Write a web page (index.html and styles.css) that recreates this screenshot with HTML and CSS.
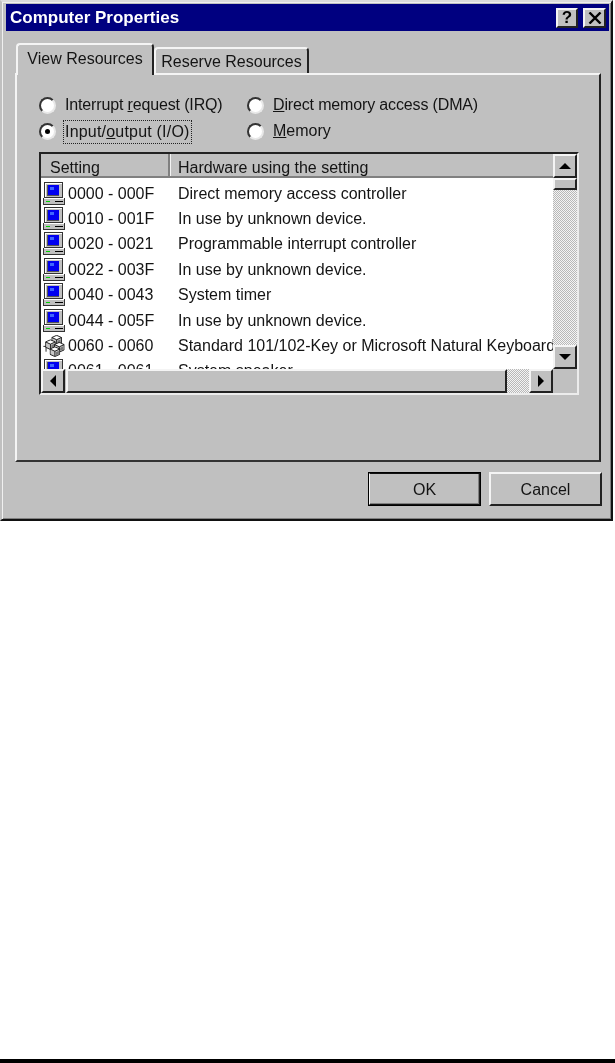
FILE: index.html
```html
<!DOCTYPE html>
<html lang="en">
<head>
  <meta charset="UTF-8">
  <title>Computer Properties</title>
  <link rel="stylesheet" href="styles.css">
</head>
<body>
  <svg class="icon-defs" width="0" height="0">
    <symbol id="pc" viewBox="0 0 22 23">
      <path d="M1 0h19v16H1z" fill="#333"/>
      <path d="M2 1h17v14H2z" fill="#c0c0c0"/>
      <path d="M2 1h17v1H3v13H2z" fill="#fff"/>
      <path d="M4 3h12v11H4z" fill="#555"/>
      <path d="M5 3h11v10H5z" fill="#0000f0"/>
      <path d="M7 5h4v3H7z" fill="#3f66ff"/>
      <path d="M0 16h22v7H0z" fill="#333"/>
      <path d="M1 16h20v6H1z" fill="#c0c0c0"/>
      <path d="M1 16h20v1H1z" fill="#fff"/>
      <path d="M3 19h4v1H3z" fill="#00d000"/>
      <path d="M12 19h8v1h-8z" fill="#000"/>
    </symbol>
    <symbol id="cube" viewBox="0 0 12 12">
      <path d="M6 .5 11.5 3v6L6 11.5.5 9V3z" fill="#c8c8c8" stroke="#111"/>
      <path d="M6 1.5 10 3 6 5 2 3z" fill="#fff"/>
      <path d="M6 5.5v5.5M.5 3 6 5.5 11.5 3" fill="none" stroke="#111"/>
      <path d="M7 6.5l3.5-1.6v3.6L7 10z" fill="#777"/>
    </symbol>
    <symbol id="device" viewBox="0 0 24 26">
      <path d="M0 14h5M3 14v6" stroke="#111" fill="none"/>
      <use href="#cube" x="9" y="1" width="12" height="12"/>
      <use href="#cube" x="2" y="6" width="12" height="12"/>
      <use href="#cube" x="12" y="9" width="12" height="12"/>
      <use href="#cube" x="7" y="14" width="12" height="12"/>
    </symbol>
  </svg>

  <div class="window">
    <div class="title-bar">
      <span class="title-text">Computer Properties</span>
      <div class="title-buttons">
        <div class="bevel title-btn help-btn">?</div>
        <div class="bevel title-btn close-btn">
          <svg width="14" height="12" viewBox="0 0 14 12"><path d="M1.5 0.5 12.5 11.5M12.5 0.5 1.5 11.5" stroke="#000" stroke-width="2.4" fill="none"/></svg>
        </div>
      </div>
    </div>

    <div class="tabs">
      <div class="tab tab-active">View Resources</div>
      <div class="tab tab-back">Reserve Resources</div>
    </div>

    <div class="panel">
      <div class="radio-grid">
        <div class="radio-item"><span class="radio"></span><span class="radio-label label-tight">Interrupt <u>r</u>equest (IRQ)</span></div>
        <div class="radio-item"><span class="radio"></span><span class="radio-label label-tight"><u>D</u>irect memory access (DMA)</span></div>
        <div class="radio-item"><span class="radio radio-on"></span><span class="radio-label radio-focus">Input/<u>o</u>utput (I/O)</span></div>
        <div class="radio-item"><span class="radio"></span><span class="radio-label"><u>M</u>emory</span></div>
      </div>

      <div class="list-frame">
        <div class="list-main">
          <div class="list-head">
            <div class="head-cell head-setting">Setting</div>
            <div class="head-cell head-hardware">Hardware using the setting</div>
          </div>
          <div class="list-rows">
            <div class="row"><svg class="row-icon"><use href="#pc"/></svg><span class="cell-setting">0000 - 000F</span><span class="cell-hw">Direct memory access controller</span></div>
            <div class="row"><svg class="row-icon"><use href="#pc"/></svg><span class="cell-setting">0010 - 001F</span><span class="cell-hw">In use by unknown device.</span></div>
            <div class="row"><svg class="row-icon"><use href="#pc"/></svg><span class="cell-setting">0020 - 0021</span><span class="cell-hw">Programmable interrupt controller</span></div>
            <div class="row"><svg class="row-icon"><use href="#pc"/></svg><span class="cell-setting">0022 - 003F</span><span class="cell-hw">In use by unknown device.</span></div>
            <div class="row"><svg class="row-icon"><use href="#pc"/></svg><span class="cell-setting">0040 - 0043</span><span class="cell-hw">System timer</span></div>
            <div class="row"><svg class="row-icon"><use href="#pc"/></svg><span class="cell-setting">0044 - 005F</span><span class="cell-hw">In use by unknown device.</span></div>
            <div class="row"><svg class="row-icon"><use href="#device"/></svg><span class="cell-setting">0060 - 0060</span><span class="cell-hw">Standard 101/102-Key or Microsoft Natural Keyboard</span></div>
            <div class="row"><svg class="row-icon"><use href="#pc"/></svg><span class="cell-setting">0061 - 0061</span><span class="cell-hw">System speaker</span></div>
          </div>
        </div>

        <div class="vscroll">
          <div class="bevel scroll-btn scroll-btn-tall"><span class="arrow arrow-up"></span></div>
          <div class="bevel vthumb"></div>
          <div class="track"></div>
          <div class="bevel scroll-btn scroll-btn-tall"><span class="arrow arrow-down"></span></div>
        </div>

        <div class="hscroll">
          <div class="bevel scroll-btn scroll-btn-wide"><span class="arrow arrow-left"></span></div>
          <div class="bevel hthumb"></div>
          <div class="track"></div>
          <div class="bevel scroll-btn scroll-btn-wide"><span class="arrow arrow-right"></span></div>
        </div>
        <div class="scroll-corner"></div>
      </div>
    </div>

    <div class="dialog-buttons">
      <div class="bevel dialog-btn dialog-default">OK</div>
      <div class="bevel dialog-btn">Cancel</div>
    </div>
  </div>

  <div class="page-rule"></div>
</body>
</html>
```

FILE: styles.css
```css
:root {
  --face: #c0c0c0;
  --text: #141414;
}

* {
  box-sizing: border-box;
}

body {
  margin: 0;
  height: 1063px;
  background-color: #fff;
  display: flex;
  flex-direction: column;
  justify-content: space-between;
  font-family: "Liberation Sans", Arial, sans-serif;
  font-size: 16px;
  color: var(--text);
  overflow: hidden;
}

.icon-defs {
  position: absolute;
}

/* raised look shared by every button */
.bevel {
  background-color: var(--face);
  border: 2px solid;
  border-color: #f4f4f4 #222 #222 #f4f4f4;
}

.window {
  width: 613px;
  height: 521px;
  background-color: var(--face);
  border: 2px solid;
  border-color: #dcdcdc #111 #111 #c0c0c0;
  box-shadow: inset 1px 1px 0 #f0f0f0, inset -1px -1px 0 #808080;
  padding: 2px 2px 0 2px;
  display: flex;
  flex-direction: column;
  filter: blur(0.35px);
}

.title-bar {
  height: 27px;
  flex: none;
  margin-left: 2px;
  background-color: #000080;
  display: flex;
  justify-content: space-between;
  align-items: center;
  padding: 0 3px 0 4px;
}

.title-text {
  color: #fff;
  font-weight: bold;
  font-size: 17px;
}

.title-buttons {
  display: flex;
  gap: 5px;
}

.title-btn {
  height: 20px;
  display: flex;
  justify-content: center;
  align-items: center;
}

.help-btn {
  width: 22px;
  font-weight: bold;
  font-size: 17px;
  color: #000;
}

.close-btn {
  width: 23px;
}

.tabs {
  flex: none;
  display: flex;
  align-items: flex-end;
  height: 30px;
  margin: 12px 0 0 12px;
  position: relative;
  z-index: 1;
}

.tab {
  background-color: var(--face);
  border: 2px solid #f4f4f4;
  border-bottom: none;
  border-right-color: #222;
  border-radius: 4px 4px 0 0;
  text-align: center;
}

.tab-active {
  width: 138px;
  height: 32px;
  margin-bottom: -2px;
  line-height: 27px;
}

.tab-back {
  width: 155px;
  height: 26px;
  line-height: 26px;
}

.panel {
  flex: none;
  width: 586px;
  height: 389px;
  margin-left: 11px;
  background-color: var(--face);
  border: 2px solid;
  border-color: #f4f4f4 #222 #333 #f4f4f4;
  padding: 17px 0 0 22px;
}

.radio-grid {
  display: grid;
  grid-template-columns: 208px auto;
  grid-auto-rows: 26px;
}

.radio-item {
  display: flex;
  align-items: center;
  gap: 7px;
}

.radio {
  width: 17px;
  height: 17px;
  flex: none;
  border-radius: 50%;
  background-color: #fff;
  border: 2px solid;
  border-color: #333 #e8e8e8 #e8e8e8 #333;
  display: flex;
  justify-content: center;
  align-items: center;
}

.radio-on::after {
  content: "";
  width: 5px;
  height: 5px;
  border-radius: 50%;
  background-color: #000;
}

.radio-label {
  padding: 2px 1px;
  border: 1px solid transparent;
  white-space: nowrap;
}

.label-tight {
  letter-spacing: -0.15px;
}

.radio-focus {
  border: 1px dotted #222;
  margin-top: 2px;
  letter-spacing: 0.2px;
}

.list-frame {
  width: 540px;
  height: 243px;
  margin: 8px 0 0 0;
  border: 2px solid;
  border-color: #222 #ececec #ececec #222;
  display: grid;
  grid-template-columns: 1fr 24px;
  grid-template-rows: 1fr 24px;
}

.list-main {
  background-color: #fff;
  overflow: hidden;
  min-width: 0;
}

.list-head {
  display: flex;
  height: 24px;
}

.head-cell {
  background-color: var(--face);
  border-bottom: 2px solid #808080;
  line-height: 27px;
  white-space: nowrap;
}

.head-setting {
  width: 129px;
  padding-left: 9px;
  border-right: 2px solid #808080;
}

.head-hardware {
  flex: 1;
  padding-left: 8px;
  box-shadow: inset 1px 0 0 #f4f4f4;
}

.list-rows {
  height: 191px;
  overflow: hidden;
  padding-top: 2.5px;
}

.row {
  height: 25.4px;
  display: flex;
  align-items: center;
  white-space: nowrap;
}

.row-icon {
  width: 22px;
  height: 23px;
  flex: none;
  margin-left: 2px;
}

.cell-setting {
  width: 113px;
  flex: none;
  padding-left: 3px;
  margin-top: 1px;
}

.cell-hw {
  margin-top: 1px;
}

.vscroll {
  display: flex;
  flex-direction: column;
}

.hscroll {
  display: flex;
}

.track {
  flex: 1;
  background: repeating-conic-gradient(#b8b8b8 0 25%, #f4f4f4 0 50%) 0 0 / 2px 2px;
}

.scroll-btn {
  display: flex;
  justify-content: center;
  align-items: center;
  flex: none;
}

.scroll-btn-tall {
  height: 24px;
}

.scroll-btn-wide {
  width: 24px;
}

.vthumb {
  height: 12px;
  flex: none;
}

.hthumb {
  width: 441px;
  flex: none;
  margin-left: 1px;
}

.scroll-corner {
  background-color: var(--face);
}

/* scroll arrows are plain css triangles */
.arrow {
  width: 0;
  height: 0;
  border-style: solid;
  border-color: transparent;
}

.arrow-up {
  border-width: 0 6px 6px;
  border-bottom-color: #000;
}

.arrow-down {
  border-width: 6px 6px 0;
  border-top-color: #000;
}

.arrow-left {
  border-width: 6px 6px 6px 0;
  border-right-color: #000;
}

.arrow-right {
  border-width: 6px 0 6px 6px;
  border-left-color: #000;
}

.dialog-buttons {
  flex: none;
  display: flex;
  gap: 8px;
  margin: 10px 0 0 364px;
}

.dialog-btn {
  width: 113px;
  height: 34px;
  padding-top: 1px;
  display: flex;
  justify-content: center;
  align-items: center;
}

.dialog-default {
  outline: 1px solid #000;
  outline-offset: -1px;
  border-color: #111 #222 #111 #f4f4f4;
  box-shadow: inset -1px -1px 0 #808080;
}

.page-rule {
  height: 4px;
  background-color: #000;
}
```
